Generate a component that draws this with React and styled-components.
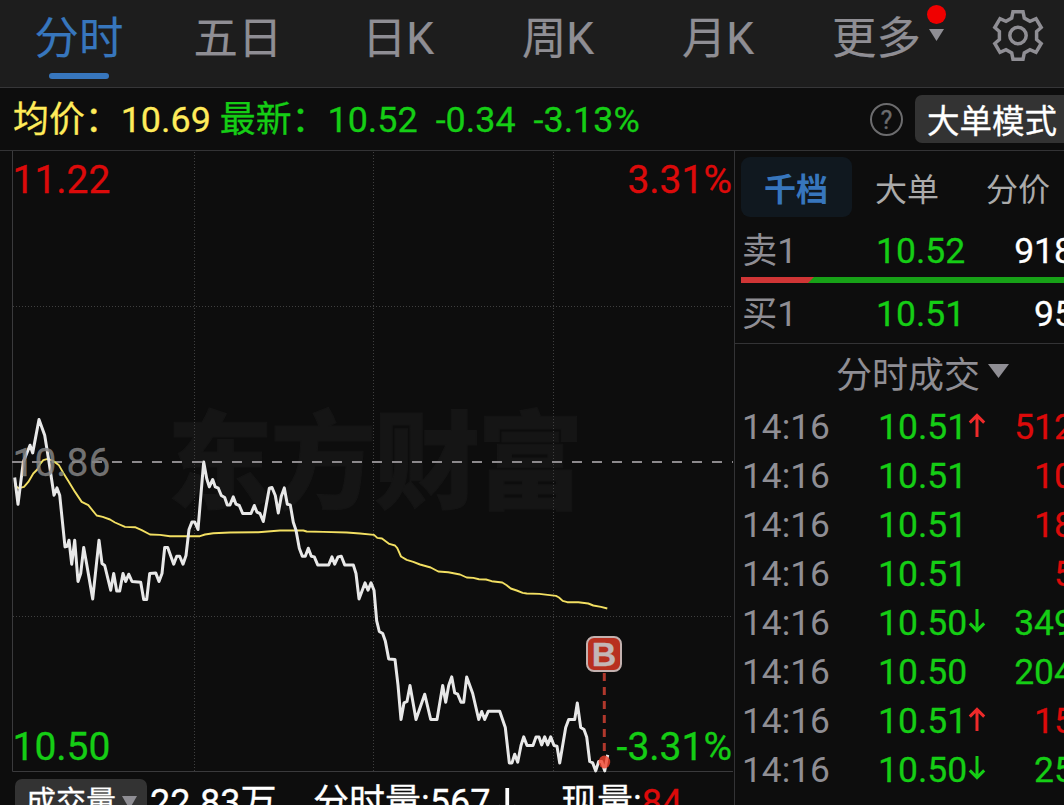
import React from 'react';
import styled, { createGlobalStyle } from 'styled-components';

const GREEN = '#15cd15';
const RED = '#dc0a0a';
const GREY = '#8f8e94';

// the minute series are kept in thirds of a pixel, see toPath
const PRICE = [
  [44, 262], [54, 342], [70, 215], [80, 190], [90, 165], [98, 188], [117, 88], [134, 135], [147, 215], [162, 315],
  [171, 293], [179, 315], [195, 470], [202, 468], [207, 450], [215, 522], [224, 450], [234, 574], [242, 550], [251, 472],
  [260, 522], [278, 626], [297, 450], [306, 520], [314, 526], [332, 600], [341, 550], [350, 602], [359, 602], [369, 550],
  [377, 574], [386, 552], [396, 574], [422, 576], [431, 628], [440, 628], [449, 550], [467, 548], [477, 574], [486, 550],
  [494, 472], [503, 472], [521, 522], [530, 498], [539, 498], [549, 522], [558, 496], [567, 418], [576, 395], [584, 395],
  [594, 418], [611, 215], [620, 265], [628, 290], [638, 268], [646, 290], [655, 294], [664, 316], [674, 322], [682, 344],
  [690, 344], [700, 320], [708, 342], [718, 346], [728, 370], [753, 370], [763, 346], [771, 366], [780, 370], [790, 394],
  [808, 294], [816, 292], [826, 316], [835, 368], [844, 318], [853, 293], [862, 342], [871, 344], [880, 396], [888, 420],
  [898, 474], [907, 498], [916, 498], [925, 474], [934, 498], [943, 500], [953, 524], [986, 524], [996, 500], [1004, 522],
  [1014, 500], [1024, 498], [1034, 524], [1060, 524], [1068, 550], [1077, 626], [1087, 600], [1095, 578], [1104, 600],
  [1113, 578], [1122, 600], [1130, 692], [1138, 724], [1148, 730], [1156, 752], [1166, 806], [1185, 808], [1194, 885],
  [1203, 988], [1212, 938], [1221, 934], [1230, 886], [1248, 988], [1274, 912], [1292, 988], [1311, 988], [1328, 886],
  [1337, 936], [1346, 886], [1355, 860], [1364, 908], [1373, 912], [1383, 936], [1391, 936], [1400, 860], [1418, 910],
  [1436, 988], [1445, 964], [1454, 988], [1465, 963], [1499, 963], [1516, 1012], [1528, 1118], [1536, 1118], [1544, 1092],
  [1553, 1116], [1563, 1066], [1571, 1040], [1581, 1066], [1599, 1066], [1608, 1040], [1617, 1040], [1625, 1064],
  [1634, 1040], [1643, 1064], [1652, 1040], [1662, 1066], [1671, 1068], [1679, 1118], [1697, 1012], [1706, 988],
  [1724, 988], [1732, 938], [1742, 1012], [1752, 1018], [1760, 1040], [1769, 1114], [1778, 1118], [1787, 1142],
  [1796, 1114], [1805, 1114], [1814, 1142], [1823, 1094],
];

const AVERAGE = [
  [44, 285], [56, 294], [72, 290], [85, 275], [100, 250], [112, 238], [120, 222], [130, 210], [143, 206], [160, 212],
  [176, 224], [190, 248], [205, 272], [225, 305], [245, 335], [265, 345], [290, 376], [308, 380], [330, 388], [345, 397],
  [375, 410], [405, 411], [425, 420], [450, 433], [480, 434], [510, 438], [600, 438], [615, 433], [640, 429], [690, 427],
  [775, 426], [840, 421], [910, 421], [920, 424], [970, 425], [1040, 427], [1080, 430], [1122, 434], [1132, 443],
  [1146, 445], [1168, 461], [1185, 466], [1192, 474], [1203, 499], [1220, 509], [1240, 515], [1260, 523], [1292, 532],
  [1315, 544], [1345, 546], [1380, 553], [1400, 562], [1420, 563], [1437, 567], [1458, 568], [1475, 573], [1507, 577],
  [1520, 585], [1532, 595], [1550, 601], [1568, 608], [1580, 610], [1618, 611], [1668, 617], [1677, 622], [1688, 632],
  [1702, 636], [1735, 636], [1765, 640], [1780, 646], [1803, 650], [1822, 655],
];

const toPath = (points) =>
  points.map(([x, y], i) => `${i ? 'L' : 'M'}${(x / 3).toFixed(1)} ${(y / 3 + 239.2).toFixed(1)}`).join('');

const TRADES = [
  { price: '10.51', dir: 'up', vol: '512', color: RED },
  { price: '10.51', vol: '10', color: RED },
  { price: '10.51', vol: '18', color: RED },
  { price: '10.51', vol: '5', color: RED },
  { price: '10.50', dir: 'down', vol: '349', color: GREEN },
  { price: '10.50', vol: '204', color: GREEN },
  { price: '10.51', dir: 'up', vol: '15', color: RED },
  { price: '10.50', dir: 'down', vol: '25', color: GREEN },
];

const Gear = () => (
  <svg width="52" height="53" viewBox="-26 -26.5 52 53" fill="none" stroke={GREY} strokeWidth="3.5">
    <path d="M-5-23.8H5L6.3-17.4L12-14.2L18-16.8L23.2-8L18.6-4V4L23.2 8L18 16.8L12 14.2L6.3 17.4L5 23.8H-5L-6.3 17.4L-12 14.2L-18 16.8L-23.2 8L-18.6 4V-4L-23.2-8L-18-16.8L-12-14.2L-6.3-17.4Z" />
    <circle r="8.2" />
  </svg>
);

const Arrow = ({ dir, color, scale = 1 }) => (
  <svg width={18 * scale} height={24 * scale} viewBox="0 0 18 24" fill="none" stroke={color} strokeWidth="3">
    {dir === 'up' ? <path d="M9 24V3M1.8 9.6L9 2.4L16.2 9.6" /> : <path d="M9 0V21M1.8 14.4L9 21.6L16.2 14.4" />}
  </svg>
);

const Triangle = ({ w, h }) => (
  <svg width={w} height={h} viewBox="0 0 10 10" preserveAspectRatio="none" fill={GREY}>
    <path d="M0 0H10L5 10Z" />
  </svg>
);

export default function App() {
  return (
    <Screen>
      <GlobalStyle />
      <Tabs>
        <Tab $active>分时</Tab>
        <Tab>五日</Tab>
        <Tab>日K</Tab>
        <Tab>周K</Tab>
        <Tab>月K</Tab>
        <More>
          更多
          <MoreMark>
            <RedDot />
            <Triangle w={15} h={12} />
          </MoreMark>
        </More>
        <GearButton>
          <Gear />
        </GearButton>
      </Tabs>

      <InfoBar>
        <Quote $color="#ffeb5a">均价：10.69</Quote>
        <Quote $color={GREEN}>最新：10.52</Quote>
        <Quote $color={GREEN}>-0.34</Quote>
        <Quote $color={GREEN}>-3.13%</Quote>
        <Help>?</Help>
        <ModeButton>大单模式</ModeButton>
      </InfoBar>

      <Body>
        <Left>
          <Chart>
            <svg width="734" height="622" viewBox="0 0 734 622" fill="none">
              <text
                x="167"
                y="349"
                fontFamily="'Noto Sans CJK SC'"
                fontWeight="900"
                fontSize="106"
                letterSpacing="-2.5"
                fill="#151515"
                stroke="#151515"
                strokeWidth="1"
              >
                东方财富
              </text>
              <g stroke="#3f3f3f" strokeDasharray="1 2">
                <path d="M194.5 1V620M373.5 1V620M553.5 1V620M13 155.5H733M13 465.5H733" />
              </g>
              <path d="M12.5 0V620.5H733" stroke="#3a3a3c" />
              <path d="M12 311H733" stroke="#8c898c" strokeWidth="2" strokeDasharray="10 10" />
              <path d={toPath(AVERAGE)} stroke="#f2df62" strokeWidth="1.9" strokeLinejoin="round" />
              <path d={toPath(PRICE)} stroke="#e8e8e8" strokeWidth="3" strokeLinejoin="round" />
              <path d="M604.3 522V601" stroke="#b0382c" strokeWidth="3" strokeDasharray="8 6" />
              <ellipse cx="604.4" cy="611" rx="5.8" ry="6.4" fill="#f4452e" fillOpacity="0.8" />
            </svg>
            <Axis $left="12.5px" $top="6px" $color={RED}>11.22</Axis>
            <Axis $left="12.5px" $top="289px" $color="rgba(132, 132, 132, 0.85)">10.86</Axis>
            <Axis $left="12.5px" $top="573px" $color={GREEN}>10.50</Axis>
            <Axis $right="2px" $top="6px" $color={RED}>3.31%</Axis>
            <Axis $right="2px" $top="573px" $color={GREEN}>-3.31%</Axis>
            <BuyMark>B</BuyMark>
          </Chart>
          <VolumeBar>
            <VolumeButton>
              成交量
              <Triangle w={15} h={13} />
            </VolumeButton>
            <Stat $w="163px">22.83万</Stat>
            <Stat $w="248px">
              分时量:567
              <Arrow dir="down" color="#fff" scale={1.25} />
            </Stat>
            <Stat>
              现量:<Hot>84</Hot>
            </Stat>
          </VolumeBar>
        </Left>

        <Side>
          <SideTabs>
            <SideTab $active>千档</SideTab>
            <SideTab>大单</SideTab>
            <SideTab>分价</SideTab>
          </SideTabs>
          <Level $line="68px">
            <Label>卖1</Label>
            <Price>10.52</Price>
            <Volume $color="#fff">918</Volume>
          </Level>
          <Ratio>
            <RatioSell />
          </Ratio>
          <Level $line="62px">
            <Label>买1</Label>
            <Price>10.51</Price>
            <Volume $color="#fff">95</Volume>
          </Level>
          <TradesTitle>
            分时成交
            <Triangle w={21} h={14} />
          </TradesTitle>
          {TRADES.map((t, i) => (
            <Trade key={i}>
              <Label>14:16</Label>
              <TradePrice>
                {t.price}
                {t.dir && <Arrow dir={t.dir} color={t.dir === 'up' ? '#ee2a2a' : GREEN} />}
              </TradePrice>
              <Volume $color={t.color}>{t.vol}</Volume>
            </Trade>
          ))}
        </Side>
      </Body>
    </Screen>
  );
}

const GlobalStyle = createGlobalStyle`
  body {
    margin: 0;
    background: #0d0d0d;
    overflow: hidden;
  }
  * {
    box-sizing: border-box;
  }
  svg {
    display: block;
    flex: none;
  }
`;

const Screen = styled.div`
  width: 1064px;
  height: 805px;
  overflow: hidden;
  display: flex;
  flex-direction: column;
  background: #0d0d0d;
  font-family: Roboto, 'Noto Sans CJK SC', sans-serif;
  font-size: 36px;
  white-space: nowrap;
  -webkit-text-stroke: 0.3px;
`;

const Tabs = styled.div`
  display: flex;
  height: 88px;
  flex: none;
  background: #1d1d1d;
  border-bottom: 1px solid #363638;
  font-size: 44.4px;
  line-height: 78px;
  color: ${GREY};
  -webkit-text-stroke: 0.2px;
`;

const Tab = styled.div`
  width: 160px;
  flex: none;
  display: flex;
  flex-direction: column;
  align-items: center;
  color: ${(p) => (p.$active ? '#3776bd' : 'inherit')};

  &:first-child {
    width: 158px;
  }

  &::after {
    content: '';
    width: 60px;
    height: 6px;
    margin-top: -5px;
    border-radius: 3px;
    background: ${(p) => (p.$active ? '#3776bd' : 'transparent')};
  }
`;

const More = styled.div`
  display: flex;
  width: 153px;
  margin-left: 34px;
`;

const MoreMark = styled.div`
  display: flex;
  flex-direction: column;
  align-items: center;
  gap: 5px;
  padding-top: 5px;
  margin-left: 6px;
`;

const RedDot = styled.div`
  width: 19px;
  height: 19px;
  border-radius: 50%;
  background: #f00000;
`;

const GearButton = styled.div`
  padding-top: 9px;
  margin-left: 7.4px;
`;

const InfoBar = styled.div`
  display: flex;
  align-items: center;
  height: 63px;
  flex: none;
  padding-left: 13px;
  border-bottom: 1px solid #333335;
`;

const Quote = styled.span`
  color: ${(p) => p.$color};
  margin-right: 9px;
  padding-top: 2px;
  font-size: 35.9px;
  line-height: 64px;

  & + & + & {
    margin-left: 9px;
  }
`;

const Help = styled.div`
  width: 33px;
  height: 33px;
  flex: none;
  margin-left: auto;
  margin-right: 12px;
  border: 2px solid #6c6c6e;
  border-radius: 50%;
  font-size: 25px;
  line-height: 31px;
  text-align: center;
  color: #6c6c6e;
`;

const ModeButton = styled.div`
  width: 149px;
  height: 48px;
  flex: none;
  padding-left: 12px;
  border-radius: 7px 0 0 7px;
  background: #333;
  color: #fff;
  font-size: 32.5px;
  line-height: 54px;
`;

const Body = styled.div`
  display: flex;
  flex: 1;
  min-height: 0;
`;

const Left = styled.div`
  width: 734px;
  flex: none;
`;

const Chart = styled.div`
  position: relative;
  height: 622px;
`;

const Axis = styled.div`
  position: absolute;
  left: ${(p) => p.$left || 'auto'};
  right: ${(p) => p.$right || 'auto'};
  top: ${(p) => p.$top};
  font-size: 39px;
  line-height: 46px;
  color: ${(p) => p.$color};
`;

const BuyMark = styled.div`
  position: absolute;
  left: 586px;
  top: 485px;
  width: 36px;
  height: 36px;
  border: 2px solid #c3b1af;
  border-radius: 8px;
  background: #b83020;
  color: #c3b6b6;
  font: bold 34px/33px 'Liberation Sans', sans-serif;
  text-align: center;
`;

const VolumeBar = styled.div`
  display: flex;
  height: 52px;
  padding-top: 6px;
  color: #fff;
`;

const VolumeButton = styled.div`
  display: flex;
  align-items: center;
  width: 132px;
  height: 46px;
  flex: none;
  margin-left: 15px;
  padding-left: 11px;
  gap: 6px;
  border-radius: 7px;
  background: #333;
  font-size: 30px;
  line-height: 44px;
`;

const Stat = styled.div`
  display: flex;
  width: ${(p) => p.$w || 'auto'};
  flex: none;
  margin-left: 3px;
  line-height: 48px;

  svg {
    margin: 9px 0 0 6px;
  }

  & + & {
    margin-left: 0;
  }
`;

const Hot = styled.span`
  color: ${RED};
`;

const Side = styled.div`
  width: 330px;
  overflow: hidden;
  border-left: 1px solid #333335;
`;

const SideTabs = styled.div`
  display: flex;
  padding: 6px 0 0 6px;
`;

const SideTab = styled.div`
  width: 111px;
  height: 60px;
  flex: none;
  border-radius: 9px;
  padding-right: 1px;
  font-size: 32px;
  line-height: 66px;
  text-align: center;
  font-weight: ${(p) => (p.$active ? 700 : 400)};
  color: ${(p) => (p.$active ? '#3776bd' : '#aaa')};
  background: ${(p) => (p.$active ? '#10181f' : 'transparent')};
  -webkit-text-stroke: 0;
`;

const Row = styled.div`
  display: grid;
  grid-template-columns: 134px 117px 81px;
  padding-left: 7px;
  font-size: 35.5px;
`;

const Level = styled(Row)`
  height: 60px;
  line-height: ${(p) => p.$line};
`;

const Trade = styled(Row)`
  grid-template-columns: 136px 115px 81px;
  height: 49px;
  line-height: 51px;
`;

const Label = styled.span`
  color: ${GREY};
  font-size: 35.3px;
  -webkit-text-stroke: 0;
`;

const Price = styled.span`
  color: ${GREEN};
`;

const TradePrice = styled.span`
  display: flex;
  gap: 1px;
  color: ${GREEN};

  svg {
    margin-top: 11px;
  }
`;

const Volume = styled.span`
  color: ${(p) => p.$color};
  text-align: right;
`;

const Ratio = styled.div`
  height: 6px;
  margin-left: 6px;
  background: #17a117;
`;

const RatioSell = styled.div`
  width: 73px;
  height: 6px;
  background: #cf3535;
  clip-path: polygon(0 0, 100% 0, calc(100% - 6px) 100%, 0 100%);
`;

const TradesTitle = styled.div`
  display: flex;
  justify-content: center;
  height: 59px;
  padding-left: 46px;
  gap: 8px;
  border-top: 1px solid #333335;
  line-height: 64px;
  color: ${GREY};
  -webkit-text-stroke: 0;

  svg {
    margin-top: 20px;
  }
`;
